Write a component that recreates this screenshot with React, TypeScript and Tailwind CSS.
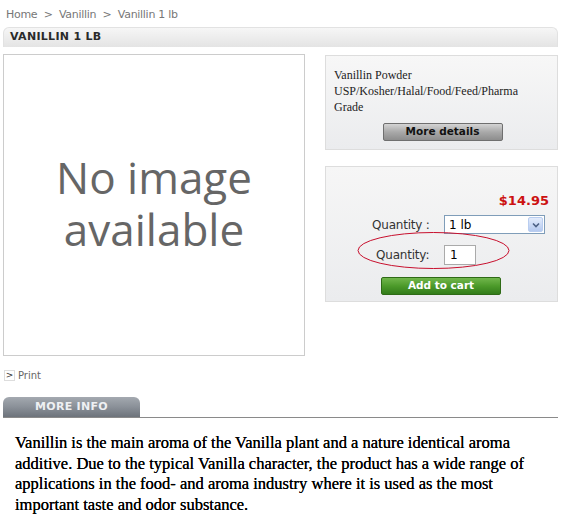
import React from "react";

export default function App() {
  return (
    <div className="w-[564px] h-[516px] bg-white overflow-hidden relative">
      {/* Breadcrumb */}
      <div className="pl-[6px] pt-[8px] h-[27px] text-[11px] leading-[14px] text-[#777] font-['DejaVu_Sans',sans-serif] tracking-[-0.3px]">
        Home &nbsp;&gt;&nbsp; Vanillin &nbsp;&gt;&nbsp; Vanillin 1 lb
      </div>
      {/* Title bar */}
      <div className="ml-[3px] w-[555px] h-[20px] rounded-t-[6px] border border-b-0 border-[#e2e2e2] bg-gradient-to-b from-[#f6f6f6] to-[#e4e4e4] flex items-center pl-[6px]">
        <span className="font-['DejaVu_Sans',sans-serif] font-bold text-[11px] text-[#2a2a2a] tracking-[0.3px]">VANILLIN 1 LB</span>
      </div>
      {/* Main row */}
      <div className="ml-[3px] mt-[7px] flex gap-[20px]">
        <div className="w-[302px] h-[302px] border border-[#cccccc] flex items-center justify-center pb-[4px]">
          <p className="text-center text-[#666] font-['Open_Sans',sans-serif] text-[44px] leading-[52px]">
            No image
            <br />
            available
          </p>
        </div>
        <div className="w-[233px] flex flex-col gap-[16px] pt-[1px]">
          <div className="h-[95px] border border-[#dddddd] bg-gradient-to-b from-[#f7f7f7] to-[#ebecee] pl-[8px] pt-[11px]">
            <div className="font-['Liberation_Serif',serif] text-[12px] leading-[16px] text-[#222]">
              Vanillin Powder
              <br />
              USP/Kosher/Halal/Food/Feed/Pharma
              <br />
              Grade
            </div>
            <div className="flex justify-center pr-[6px] mt-[8px]">
              <div className="w-[120px] h-[18px] rounded-[2px] border border-[#6f6f6f] bg-gradient-to-b from-[#d4d4d4] via-[#a9a9a9] to-[#8d8d8d] flex items-center justify-center font-['DejaVu_Sans',sans-serif] font-bold text-[10.5px] text-[#111]">
                More details
              </div>
            </div>
          </div>
          <div className="relative h-[136px] border border-[#dddddd] bg-gradient-to-b from-[#f6f6f6] to-[#ebecee]">
            <div className="flex justify-end pr-[8px] pt-[26px] font-['DejaVu_Sans',sans-serif] font-bold text-[13px] leading-[16px] text-[#cc1111]">
              $14.95
            </div>
            <div className="flex items-center mt-[6px] ml-[46px] h-[19px]">
              <span className="w-[72px] text-[12px] text-[#333] font-['DejaVu_Sans',sans-serif] tracking-[-0.2px]">Quantity :</span>
              <div className="w-[101px] h-[19px] border border-[#7f9db9] bg-white flex items-center justify-between">
                <span className="pl-[4px] text-[12px] text-[#000] font-['DejaVu_Sans',sans-serif]">1 lb</span>
                <div className="w-[15px] h-[15px] mr-[1px] rounded-[2px] bg-gradient-to-b from-[#e3ecfc] to-[#b5c9ef] border border-[#b9cdf0] flex items-center justify-center">
                  <svg width="8" height="6" viewBox="0 0 8 6">
                    <path d="M1 1.5 L4 4.5 L7 1.5" stroke="#4d6185" strokeWidth="1.6" fill="none" />
                  </svg>
                </div>
              </div>
            </div>
            <div className="flex items-center mt-[11px] ml-[50px] h-[20px]">
              <span className="w-[68px] text-[12px] text-[#333] font-['DejaVu_Sans',sans-serif] tracking-[-0.2px]">Quantity:</span>
              <div className="w-[32px] h-[20px] border border-[#aaaaaa] bg-white flex items-center pl-[5px] text-[12px] text-[#000] font-['DejaVu_Sans',sans-serif]">
                1
              </div>
            </div>
            <div className="flex mt-[12px] ml-[55px]">
              <div className="w-[120px] h-[18px] rounded-[2px] border border-[#2e6a16] bg-gradient-to-b from-[#71b64b] via-[#4c9a2a] to-[#327c1a] flex items-center justify-center font-['DejaVu_Sans',sans-serif] font-bold text-[10.5px] text-white">
                Add to cart
              </div>
            </div>
            <svg className="absolute left-[31px] top-[64px]" width="153" height="39" viewBox="0 0 153 39">
              <ellipse cx="76.5" cy="19.5" rx="75.5" ry="18" fill="none" stroke="#c8102e" strokeWidth="1" />
            </svg>
          </div>
        </div>
      </div>
      {/* Print */}
      <div className="ml-[4px] mt-[13px] flex items-center gap-[3px] h-[12px]">
        <div className="w-[11px] h-[11px] border border-[#ddd] flex items-center justify-center text-[9px] leading-none text-[#333] font-['DejaVu_Sans',sans-serif]">&gt;</div>
        <span className="text-[10px] text-[#666] font-['DejaVu_Sans',sans-serif]">Print</span>
      </div>
      {/* More info tab */}
      <div className="ml-[3px] mt-[16px] w-[555px] flex items-end border-b border-[#8a8a8a]">
        <div className="w-[137px] h-[20px] rounded-t-[6px] bg-gradient-to-b from-[#a4a9b0] via-[#8a9098] to-[#6d737b] flex items-center justify-center">
          <span className="font-['DejaVu_Sans',sans-serif] font-bold text-[11px] text-[#eef0f3] tracking-[0.3px]">MORE INFO</span>
        </div>
      </div>
      {/* Description */}
      <div className="ml-[15px] mt-[15px] w-[518px] font-['Liberation_Serif',serif] text-[16.5px] leading-[20.5px] text-black [text-shadow:0_0_0.4px_#000]">
        Vanillin is the main aroma of the Vanilla plant and a nature identical aroma additive. Due to the typical Vanilla character, the product has a wide range of applications in the food- and aroma industry where it is used as the most important taste and odor substance.
      </div>
    </div>
  );
}
